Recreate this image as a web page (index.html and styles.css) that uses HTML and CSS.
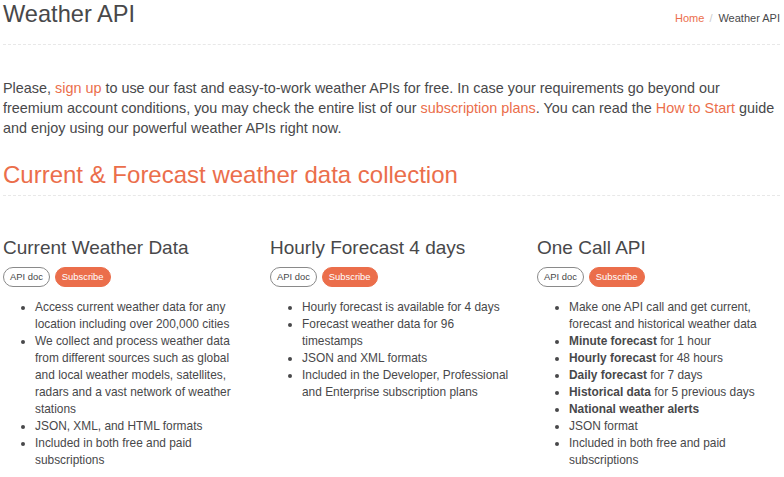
FILE: index.html
```html
<!DOCTYPE html>
<html lang="en">
<head>
    <meta charset="UTF-8">
    <meta name="viewport" content="width=device-width, initial-scale=1.0">
    <title>Weather API</title>
    <link rel="stylesheet" href="styles.css">
</head>
<body>

<div class="container">
    <!-- Page header with breadcrumb -->
    <div class="page-header">
        <h1 class="page-title">Weather API</h1>
        <ol class="breadcrumb">
            <li><a href="#">Home</a></li>
            <li>Weather API</li>
        </ol>
    </div>

    <p class="intro">
        Please, <a href="#">sign up</a> to use our fast and easy-to-work weather APIs for free. In case your requirements go beyond our freemium account conditions, you may check the entire list of our <a href="#">subscription plans</a>. You can read the <a href="#">How to Start</a> guide and enjoy using our powerful weather APIs right now.
    </p>

    <h2 class="section-title">Current &amp; Forecast weather data collection</h2>

    <div class="api-grid">
        <div class="api-card">
            <h3>Current Weather Data</h3>
            <div class="btn-row">
                <a href="#" class="btn btn-outline">API doc</a>
                <a href="#" class="btn btn-orange">Subscribe</a>
            </div>
            <ul>
                <li>Access current weather data for any location including over 200,000 cities</li>
                <li>We collect and process weather data from different sources such as global and local weather models, satellites, radars and a vast network of weather stations</li>
                <li>JSON, XML, and HTML formats</li>
                <li>Included in both free and paid subscriptions</li>
            </ul>
        </div>

        <div class="api-card">
            <h3>Hourly Forecast 4 days</h3>
            <div class="btn-row">
                <a href="#" class="btn btn-outline">API doc</a>
                <a href="#" class="btn btn-orange">Subscribe</a>
            </div>
            <ul>
                <li>Hourly forecast is available for 4 days</li>
                <li>Forecast weather data for 96 timestamps</li>
                <li>JSON and XML formats</li>
                <li>Included in the Developer, Professional and Enterprise subscription plans</li>
            </ul>
        </div>

        <div class="api-card">
            <h3>One Call API</h3>
            <div class="btn-row">
                <a href="#" class="btn btn-outline">API doc</a>
                <a href="#" class="btn btn-orange">Subscribe</a>
            </div>
            <ul>
                <li>Make one API call and get current, forecast and historical weather data</li>
                <li><b>Minute forecast</b> for 1 hour</li>
                <li><b>Hourly forecast</b> for 48 hours</li>
                <li><b>Daily forecast</b> for 7 days</li>
                <li><b>Historical data</b> for 5 previous days</li>
                <li><b>National weather alerts</b></li>
                <li>JSON format</li>
                <li>Included in both free and paid subscriptions</li>
            </ul>
        </div>
    </div>
</div>

</body>
</html>
```

FILE: styles.css
```css
body {
    margin: 0;
    font-family: "Liberation Sans", Arial, sans-serif;
    color: #48484a;
    background: #fff;
}
a {
    color: #eb6e4b;
    text-decoration: none;
}
.container {
    padding: 0 4px 0 3px;
}
.page-header {
    display: flex;
    justify-content: space-between;
    align-items: baseline;
    padding-bottom: 16px;
    border-bottom: 1px dashed #e8e8e8;
}
.page-title {
    margin: 0;
    font-size: 23.6px;
    font-weight: normal;
    line-height: 28px;
}
.breadcrumb {
    display: flex;
    margin: 0;
    padding: 0;
    list-style: none;
    font-size: 11px;
}
.breadcrumb li + li::before {
    content: "/";
    color: #ccc;
    padding: 0 6px 0 5px;
}
.intro {
    margin: 33px 0 0;
    font-size: 14.4px;
    line-height: 20px;
}
.section-title {
    margin: 22px 0 0;
    padding-bottom: 5px;
    font-size: 24px;
    font-weight: normal;
    line-height: 30px;
    color: #eb6e4b;
    border-bottom: 1px dashed #e8e8e8;
}
.api-grid {
    display: grid;
    grid-template-columns: repeat(3, 247px);
    column-gap: 20px;
    margin-top: 40px;
}
.api-card h3 {
    margin: 0;
    font-size: 19px;
    font-weight: normal;
    line-height: 24px;
}
.btn-row {
    display: flex;
    gap: 5px;
    margin-top: 7px;
}
.btn {
    display: inline-block;
    height: 20px;
    box-sizing: border-box;
    padding: 0 6px;
    border-radius: 10px;
    font-size: 9.4px;
    line-height: 18px;
    border: 1px solid #8a8a8a;
    color: #48484a;
}
.btn-orange {
    background: #eb6e4b;
    border-color: #eb6e4b;
    color: #fff;
}
.api-card ul {
    margin: 12px 0 0;
    padding-left: 32px;
    font-size: 11.9px;
    line-height: 17px;
}
.api-card b {
    font-weight: bold;
}
```
